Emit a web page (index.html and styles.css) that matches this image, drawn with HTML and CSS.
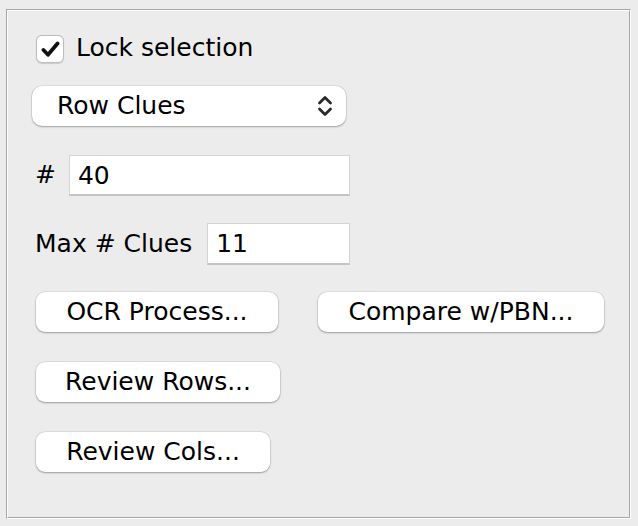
FILE: index.html
```html
<!DOCTYPE html>
<html>
<head>
<meta charset="utf-8">
<link rel="stylesheet" href="styles.css">
</head>
<body>
<div class="etch-outer">
  <div class="etch-inner">
    <label class="check-row">
      <span class="checkbox">
        <svg width="19" height="17" viewBox="0 0 19 17"><path d="M2.5 9 L7 13.8 L16.5 2.5" fill="none" stroke="#111" stroke-width="3.8" stroke-linecap="round" stroke-linejoin="round"/></svg>
      </span>
      <span class="check-label">Lock selection</span>
    </label>

    <div class="combo">
      <span class="combo-text">Row Clues</span>
      <svg class="combo-arrows" width="16" height="24" viewBox="0 0 16 24"><path d="M2.5 9 L8 3.5 L13.5 9" fill="none" stroke="#2a2a2a" stroke-width="2.8" stroke-linecap="round" stroke-linejoin="round"/><path d="M2.5 15 L8 20.5 L13.5 15" fill="none" stroke="#2a2a2a" stroke-width="2.8" stroke-linecap="round" stroke-linejoin="round"/></svg>
    </div>

    <div class="field-row row-num">
      <span class="field-label">#</span>
      <div class="field field-num">40</div>
    </div>

    <div class="field-row row-max">
      <span class="field-label">Max # Clues</span>
      <div class="field field-max">11</div>
    </div>

    <div class="button-row row-b1">
      <button class="btn btn-ocr">OCR Process...</button>
      <button class="btn btn-cmp">Compare w/PBN...</button>
    </div>
    <div class="button-row row-b2">
      <button class="btn btn-rows">Review Rows...</button>
    </div>
    <div class="button-row row-b3">
      <button class="btn btn-cols">Review Cols...</button>
    </div>
  </div>
</div>
</body>
</html>
```

FILE: styles.css
```css
html, body {
  margin: 0;
  padding: 0;
  background: #ececec;
  width: 638px;
  height: 526px;
  overflow: hidden;
}
body {
  font-family: "DejaVu Sans", "Liberation Sans", sans-serif;
  font-size: 25px;
  color: #000;
  padding: 9px 0 0 6px;
  box-sizing: border-box;
}
.etch-outer {
  width: 625px;
  height: 510px;
  box-sizing: border-box;
  border: 1px solid #a6a6a6;
  border-right-color: #ffffff;
  border-bottom-color: #ffffff;
}
.etch-inner {
  height: 100%;
  box-sizing: border-box;
  border: 1px solid #ffffff;
  border-right-color: #a6a6a6;
  border-bottom-color: #a6a6a6;
  padding: 24px 0 0 24px;
  display: flex;
  flex-direction: column;
  align-items: flex-start;
}
.check-row {
  display: flex;
  align-items: center;
  height: 27px;
  margin-left: 4px;
}
.checkbox {
  width: 26px;
  height: 26px;
  border: 1px solid #bdbdbd;
  border-radius: 6px;
  background: #fff;
  display: flex;
  align-items: center;
  justify-content: center;
  box-shadow: 0 0.5px 1px rgba(0,0,0,0.15);
}
.checkbox svg { display: block; margin-top: 1px; }
.check-label {
  margin-left: 12px;
  position: relative;
  top: -1px;
}
.combo {
  margin-top: 24px;
  width: 314px;
  height: 40px;
  background: #fff;
  border-radius: 10px;
  box-shadow: 0 0 0 0.5px rgba(0,0,0,0.12), 0 1px 2px rgba(0,0,0,0.28);
  display: flex;
  align-items: center;
  justify-content: space-between;
  box-sizing: border-box;
  padding: 0 13px 0 25px;
}
.combo-text { position: relative; top: -1px; }
.combo-arrows { display: block; }
.field-row {
  display: flex;
  align-items: center;
  margin-left: 3px;
}
.row-num { margin-top: 29px; }
.row-max { margin-top: 27px; }
.field-label { position: relative; top: -1px; }
.field {
  background: #fff;
  box-sizing: border-box;
  border: 1px solid #d4d4d4;
  border-bottom: 2px solid #c4c4c4;
  padding-left: 8px;
  display: flex;
  align-items: center;
}
.field-num {
  width: 281px;
  height: 41px;
  margin-left: 13px;
}
.field-max {
  width: 143px;
  height: 42px;
  margin-left: 15px;
}
.button-row {
  display: flex;
  gap: 40px;
  margin-left: 4px;
}
.row-b1 { margin-top: 27px; }
.row-b2 { margin-top: 30px; }
.row-b3 { margin-top: 30px; }
.btn {
  font-family: inherit;
  font-size: 25px;
  color: #000;
  height: 40px;
  background: #fff;
  border: none;
  border-radius: 9px;
  box-shadow: 0 0 0 0.5px rgba(0,0,0,0.12), 0 1px 2px rgba(0,0,0,0.3);
  padding: 0 0 2px 0;
  margin: 0;
  text-align: center;
}
.btn-ocr { width: 242px; }
.btn-cmp { width: 286px; }
.btn-rows { width: 244px; }
.btn-cols { width: 234px; }
```
